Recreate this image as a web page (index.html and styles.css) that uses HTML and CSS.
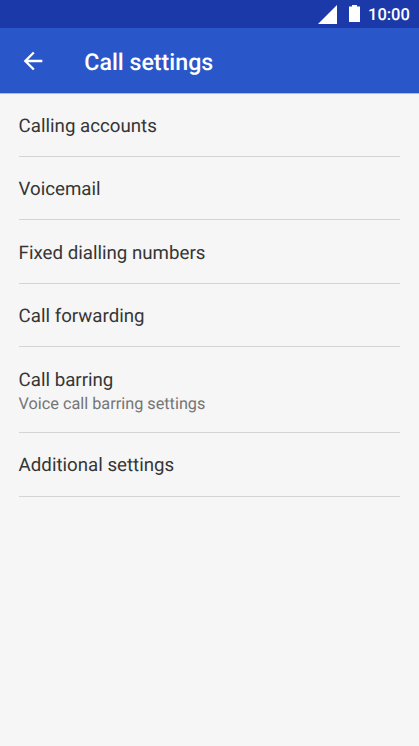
FILE: index.html
```html
<!DOCTYPE html>
<html lang="en">
<head>
<meta charset="utf-8">
<title>Call settings</title>
<link rel="stylesheet" href="styles.css">
</head>
<body>
<div class="status">
  <svg class="signal" width="19" height="19" viewBox="0 0 19 19"><path d="M19 0v19H0z"/></svg>
  <svg class="battery" width="11" height="17" viewBox="0 0 11 17"><path d="M3 0h5v1.5h3V17H0V1.5h3z"/></svg>
  <span class="clock">10:00</span>
</div>
<header class="bar">
  <svg class="back" width="28" height="28" viewBox="0 0 24 24"><path d="M20 11H7.83l5.59-5.59L12 4l-8 8 8 8 1.41-1.41L7.83 13H20v-2z"/></svg>
  <h1>Call settings</h1>
</header>
<main class="list">
  <div class="item"><span>Calling accounts</span></div>
  <div class="item"><span>Voicemail</span></div>
  <div class="item"><span>Fixed dialling numbers</span></div>
  <div class="item"><span>Call forwarding</span></div>
  <div class="item double"><span>Call barring</span><small>Voice call barring settings</small></div>
  <div class="item"><span>Additional settings</span></div>
</main>
</body>
</html>
```
FILE: styles.css
```css
* { box-sizing: border-box; }
body { margin: 0; height: 746px; overflow: hidden; background: #f6f6f6; font-family: Roboto, "Liberation Sans", sans-serif; text-rendering: geometricPrecision; }
.status { height: 28px; background: #1c39aa; display: flex; justify-content: flex-end; padding: 5px 9px 0 0; color: #fff; }
svg { display: block; fill: #fff; flex: none; }
.battery { margin-left: 12px; }
.clock { width: 42px; margin: 1px 0 0 8px; font-size: 16.5px; line-height: 20px; font-weight: 500; white-space: nowrap; }
.bar { height: 66px; background: #2957c9; display: flex; align-items: center; padding-left: 18.5px; border-bottom: 1px solid #a9bbe7; }
h1 { margin: 3px 0 0 37.8px; font-size: 23.2px; line-height: 30px; font-weight: 500; color: #fff; white-space: nowrap; }
.list { padding: 0 19px; }
.item { height: 63.6px; border-bottom: 1px solid #d4d4d4; display: flex; flex-direction: column; padding-top: 20.5px; font-size: 18.7px; line-height: 24px; color: #353535; white-space: nowrap; }
.item:first-child { margin-top: -1px; }
.item span, .item small { margin-left: -0.4px; }
.double { height: 85.6px; }
small { font-size: 16.25px; line-height: 24px; color: #757575; }
```
